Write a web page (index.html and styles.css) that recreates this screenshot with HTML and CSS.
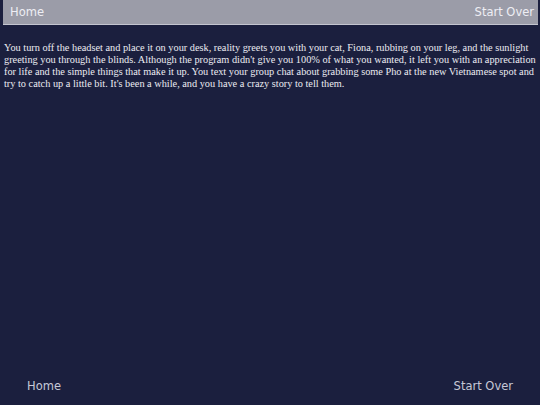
FILE: index.html
```
<!DOCTYPE html>
<html>
<head>
<meta charset="utf-8">
<link rel="stylesheet" href="styles.css">
</head>
<body>
<div class="page">
  <header class="topbar">
    <a class="nav-link">Home</a>
    <a class="nav-link">Start Over</a>
  </header>
  <p class="story">You turn off the headset and place it on your desk, reality greets you with your cat, Fiona, rubbing on your leg, and the sunlight greeting you through the blinds. Although the program didn't give you 100% of what you wanted, it left you with an appreciation for life and the simple things that make it up. You text your group chat about grabbing some Pho at the new Vietnamese spot and try to catch up a little bit. It's been a while, and you have a crazy story to tell them.</p>
  <footer class="bottombar">
    <a class="nav-link">Home</a>
    <a class="nav-link">Start Over</a>
  </footer>
</div>
</body>
</html>
```
FILE: styles.css
```
html, body {
  margin: 0;
  padding: 0;
  background: #1b1f3e;
}
.page {
  width: 540px;
  height: 405px;
  display: flex;
  flex-direction: column;
  box-sizing: border-box;
}
.topbar {
  margin: 0 2px 0 3px;
  height: 25px;
  background: #9b9ca8;
  border-bottom: 1px solid #c4c5cf;
  box-sizing: border-box;
  display: flex;
  justify-content: space-between;
  align-items: center;
  padding: 0 4px 0 7px;
}
.nav-link {
  font-family: "DejaVu Sans", sans-serif;
  font-size: 11.5px;
  color: #eeeef4;
}
.story {
  margin: 17px 4px 0 4px;
  font-family: "Liberation Serif", serif;
  font-size: 10.3px;
  line-height: 12px;
  color: #ececf2;
}
.bottombar {
  margin-top: auto;
  height: 26px;
  display: flex;
  justify-content: space-between;
  align-items: flex-start;
  padding: 0 27px 0 27px;
}
.bottombar .nav-link {
  color: #c6c8d6;
}
```
